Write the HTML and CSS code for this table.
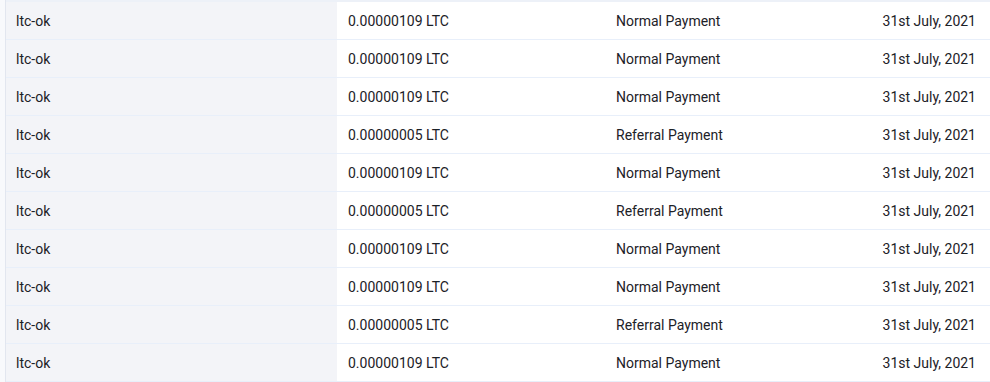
FILE: index.html
```html
<!DOCTYPE html>
<html>
<head>
<meta charset="utf-8">
<link rel="stylesheet" href="styles.css">
</head>
<body>
<div class="wrap">
  <div class="topband"></div>
  <table class="payments">
    <tbody>
      <tr><td class="user">ltc-ok</td><td class="amt">0.00000109 LTC</td><td class="type">Normal Payment</td><td class="date">31st July, 2021</td></tr>
      <tr><td class="user">ltc-ok</td><td class="amt">0.00000109 LTC</td><td class="type">Normal Payment</td><td class="date">31st July, 2021</td></tr>
      <tr><td class="user">ltc-ok</td><td class="amt">0.00000109 LTC</td><td class="type">Normal Payment</td><td class="date">31st July, 2021</td></tr>
      <tr><td class="user">ltc-ok</td><td class="amt">0.00000005 LTC</td><td class="type">Referral Payment</td><td class="date">31st July, 2021</td></tr>
      <tr><td class="user">ltc-ok</td><td class="amt">0.00000109 LTC</td><td class="type">Normal Payment</td><td class="date">31st July, 2021</td></tr>
      <tr><td class="user">ltc-ok</td><td class="amt">0.00000005 LTC</td><td class="type">Referral Payment</td><td class="date">31st July, 2021</td></tr>
      <tr><td class="user">ltc-ok</td><td class="amt">0.00000109 LTC</td><td class="type">Normal Payment</td><td class="date">31st July, 2021</td></tr>
      <tr><td class="user">ltc-ok</td><td class="amt">0.00000109 LTC</td><td class="type">Normal Payment</td><td class="date">31st July, 2021</td></tr>
      <tr><td class="user">ltc-ok</td><td class="amt">0.00000005 LTC</td><td class="type">Referral Payment</td><td class="date">31st July, 2021</td></tr>
      <tr><td class="user">ltc-ok</td><td class="amt">0.00000109 LTC</td><td class="type">Normal Payment</td><td class="date">31st July, 2021</td></tr>
    </tbody>
  </table>
</div>
</body>
</html>
```
FILE: styles.css
```css
html, body {
  margin: 0;
  padding: 0;
  background: #f8f9fc;
  font-family: Roboto, "Liberation Sans", sans-serif;
  font-size: 14px;
  color: #1c2127;
  overflow: hidden;
}
.wrap {
  margin-left: 5px;
  border-left: 1px solid #e2e6ef;
  background: #ffffff;
}
.topband {
  height: 2px;
  background: #edf1f8;
}
.payments {
  width: 100%;
  border-collapse: collapse;
  table-layout: fixed;
}
.payments td {
  height: 37px;
  padding: 0 11px 0 10px;
  border-bottom: 1px solid #e8effa;
  white-space: nowrap;
  vertical-align: middle;
  line-height: 16px;
}
.payments .user {
  width: 310px;
  background: #f3f4f8;
}
.payments .amt {
  width: 246px;
  padding-left: 11px;
}
.payments .type {
  width: 220px;
  padding-left: 11px;
}
.payments .date {
  text-align: right;
  padding-right: 14px;
}
```
